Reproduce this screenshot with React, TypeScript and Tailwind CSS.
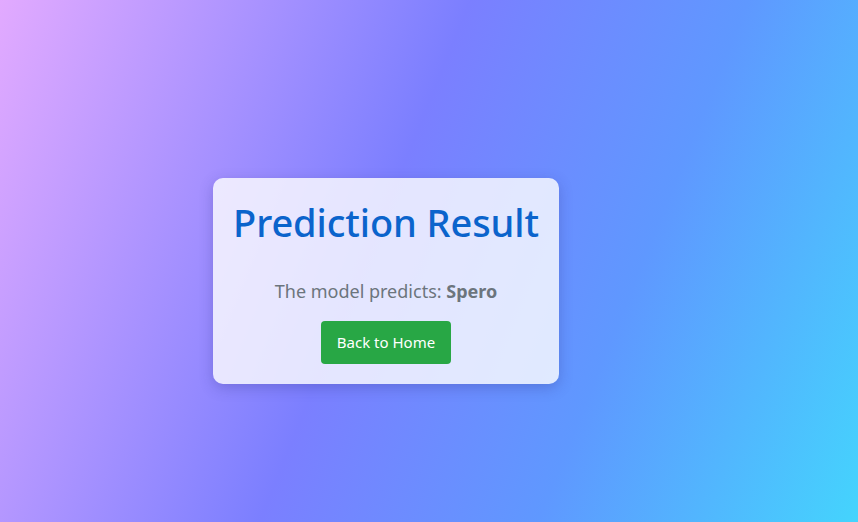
import React from "react";

export default function App() {
  return (
    <div
      className="w-[858px] h-[522px] overflow-hidden bg-[linear-gradient(112deg,#e2aaff_0%,#7b7fff_44%,#5f98ff_70%,#44d4fd_100%)]"
      style={{ fontFamily: '"Noto Sans", "Open Sans", sans-serif' }}
    >
      <div className="pl-[213px] pt-[178px]">
        <div className="w-[346px] h-[206px] rounded-[10px] bg-white/80 shadow-[0_4px_14px_rgba(40,40,120,0.25)] px-4 pt-5 flex flex-col items-center">
          <h1 className="text-[38px] font-medium leading-[48px] text-[#0b64cc] tracking-[-0.1px] whitespace-nowrap">
            Prediction Result
          </h1>
          <p className="mt-[32px] text-[18px] leading-[27px] text-[#6c757d] whitespace-nowrap">
            The model predicts: <b className="font-bold">Spero</b>
          </p>
          <button className="mt-[16px] w-[130px] h-[43px] rounded-[4px] bg-[#28a745] text-white text-[15px]">
            Back to Home
          </button>
        </div>
      </div>
    </div>
  );
}
